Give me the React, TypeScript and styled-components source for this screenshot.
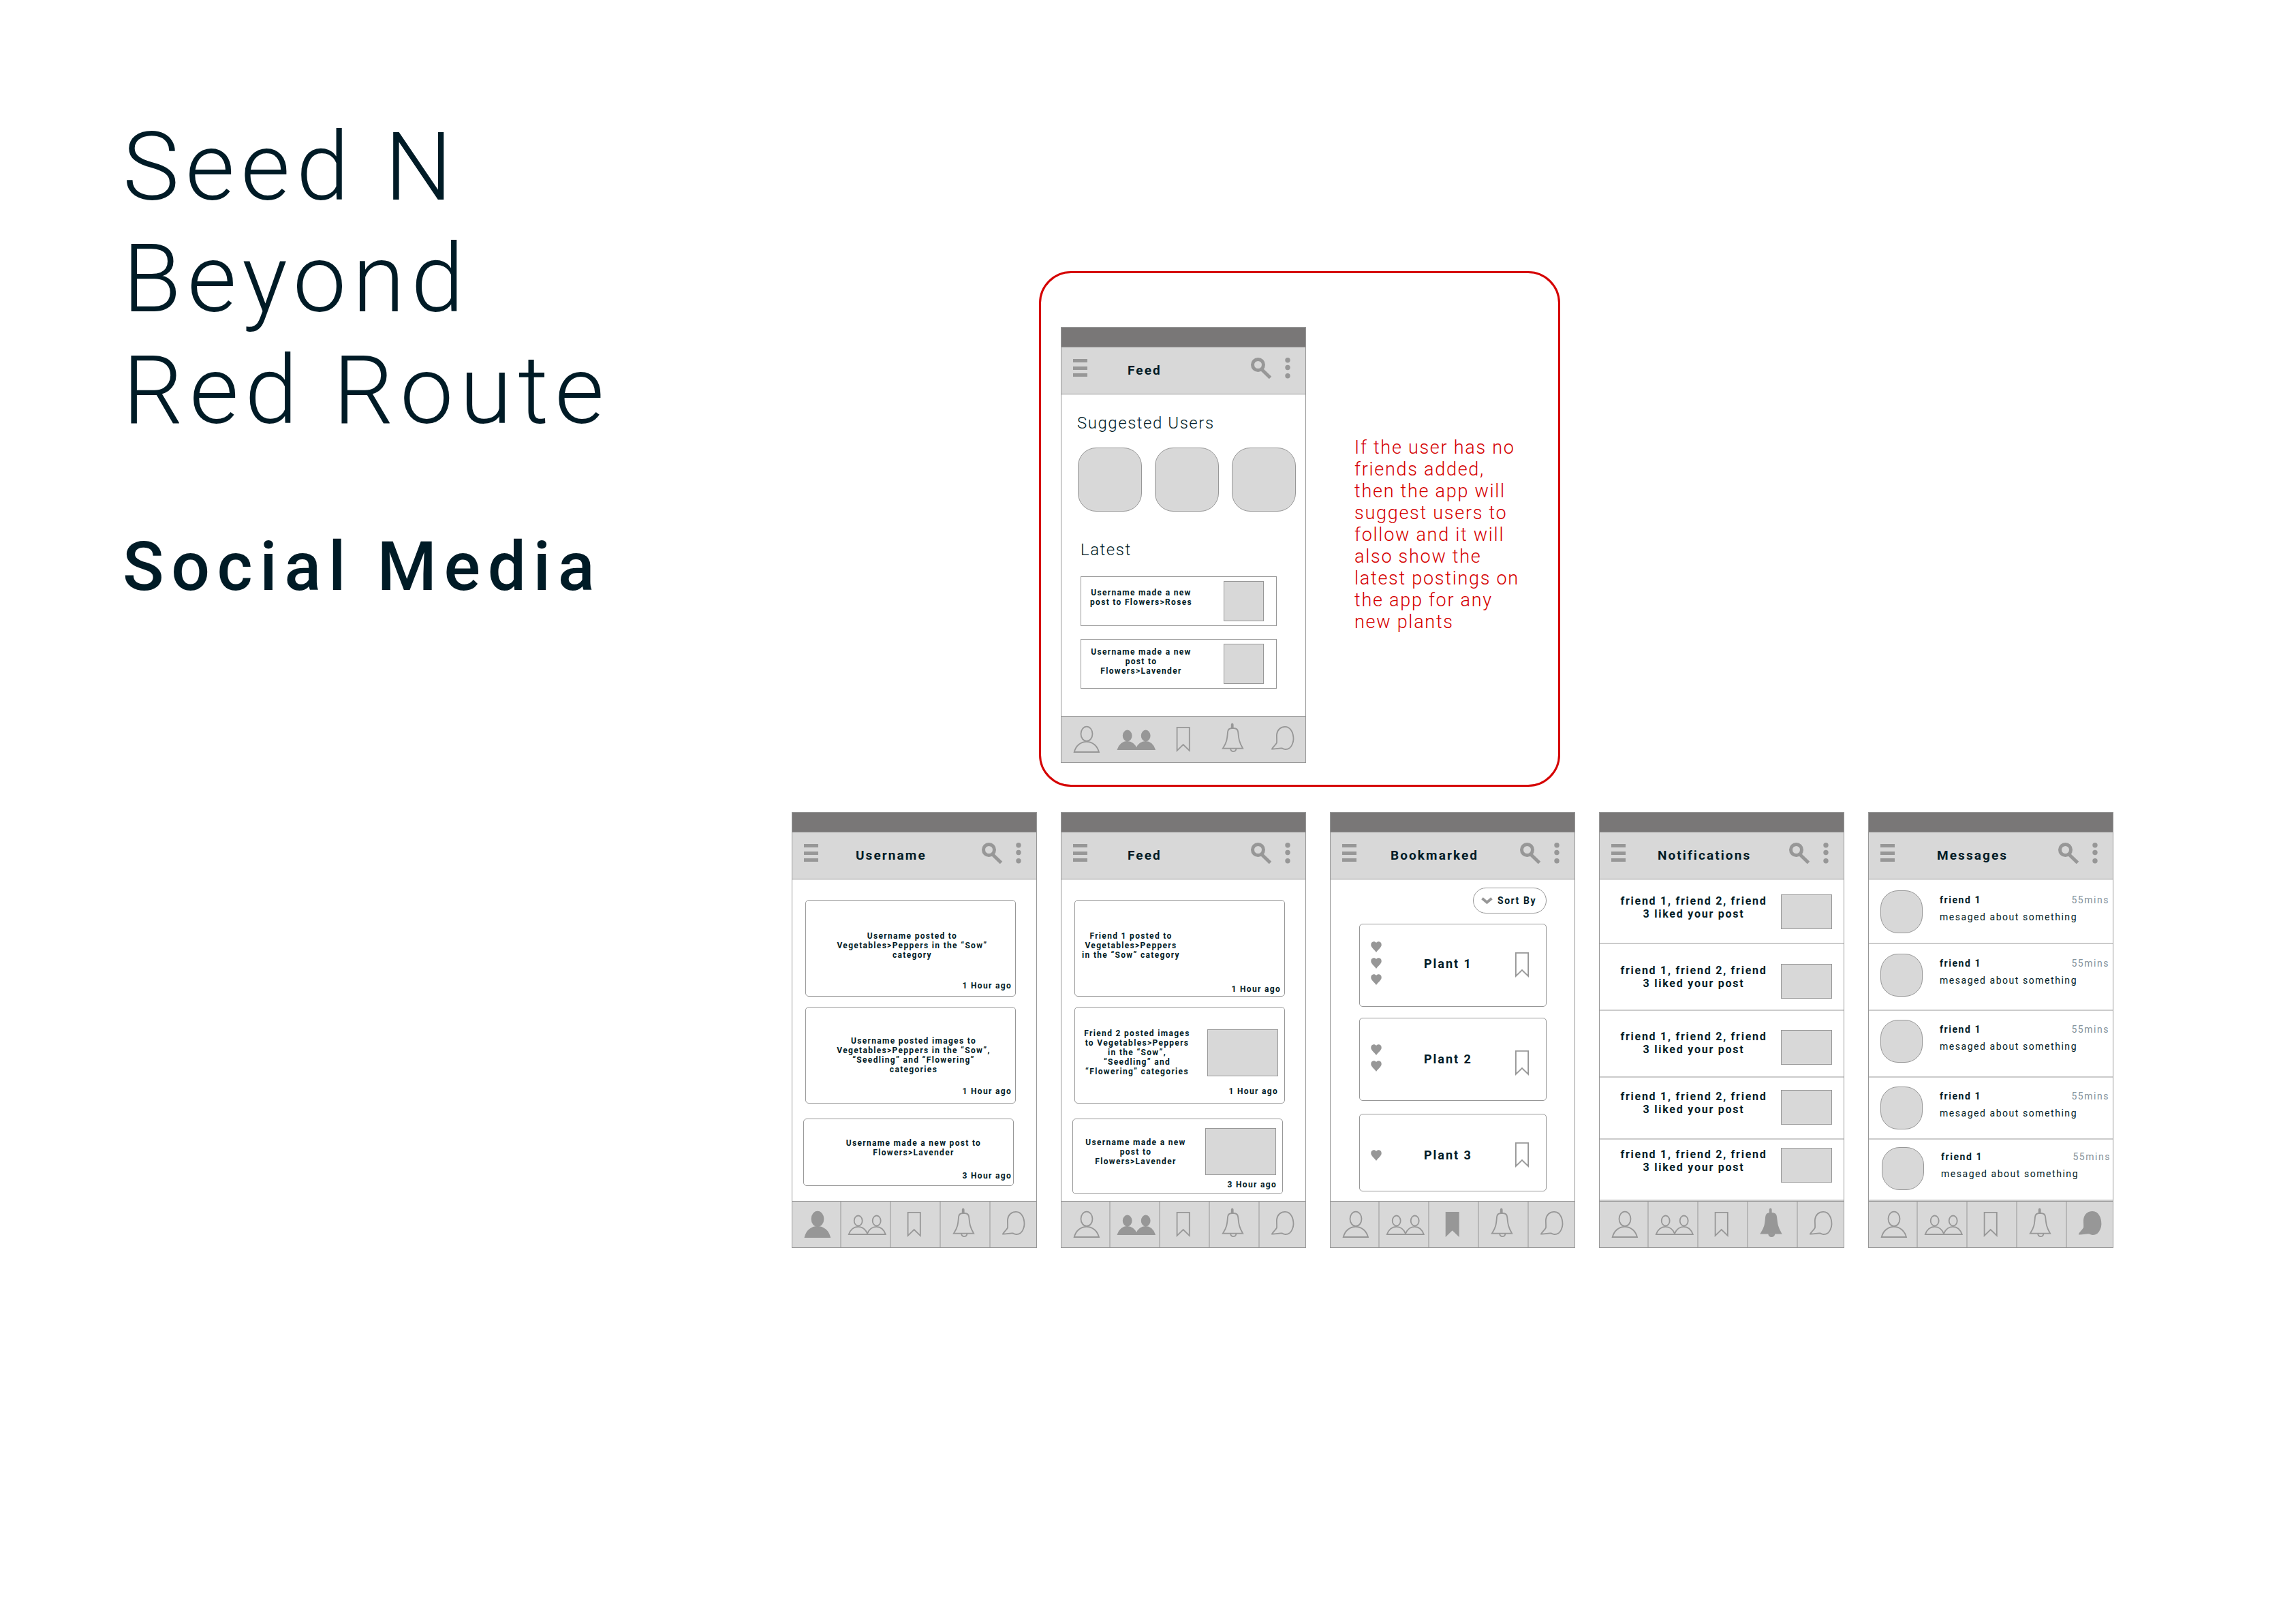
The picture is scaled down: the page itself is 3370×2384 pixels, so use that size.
import React from "react";
import styled, { createGlobalStyle } from "styled-components";

const ink = "#001b26";
const line = "#979797";
const fill = "#d8d8d8";
const red = "#d50000";

const GlobalStyle = createGlobalStyle`
  * { box-sizing: border-box; }
  body {
    margin: 0;
    background: #fff;
    color: ${ink};
    font-family: Roboto, "Liberation Sans", sans-serif;
  }
  h1, h2, h3, p, ul { margin: 0; padding: 0; font-weight: inherit; }
  ul { list-style: none; }
  button { padding: 0; border: 0; background: none; color: inherit; font: inherit; cursor: pointer; }
  svg { display: block; }
`;

/* ---------- page ---------- */

const Page = styled.main`
  display: flex;
  justify-content: space-between;
  align-items: flex-start;
  min-height: 100vh;
  padding: 163px 268px 160px 180px;
`;

const Intro = styled.header`
  display: flex;
  flex-direction: column;
  gap: 118px;
`;

const Title = styled.h1`
  font-size: 140px;
  line-height: 164px;
  font-weight: 300;
  letter-spacing: 0.064em;
  span { display: block; }
`;

const Subtitle = styled.h2`
  font-size: 100px;
  line-height: 117px;
  font-weight: 500;
  letter-spacing: 0.106em;
`;

const Board = styled.div`
  display: flex;
  flex-direction: column;
  gap: 37px;
  margin-top: 235px;
`;

const Callout = styled.section`
  display: flex;
  align-items: flex-start;
  gap: 71px;
  align-self: flex-start;
  margin-left: 363px;
  padding: 79px 51px 32px 29px;
  border: 3px solid ${red};
  border-radius: 47px;
`;

const Note = styled.p`
  width: 248px;
  margin-top: 161px;
  color: ${red};
  font-size: 27px;
  line-height: 32px;
  font-weight: 300;
  letter-spacing: 0.064em;
`;

const Flow = styled.section`
  display: flex;
  gap: 35px;
`;

/* ---------- phone ---------- */

const Frame = styled.article`
  display: flex;
  flex-direction: column;
  flex: none;
  width: 360px;
  height: 640px;
  border: 1px solid ${line};
  background: #fff;
`;

const StatusBar = styled.div`
  flex: none;
  height: 29px;
  border-bottom: 1px solid ${line};
  background: #797777;
`;

const AppBar = styled.header`
  display: flex;
  align-items: flex-start;
  flex: none;
  height: 69px;
  padding: 15px 22px 0 17px;
  border-bottom: 1px solid ${line};
  background: ${fill};
`;

const ScreenTitle = styled.h3<{ $inset: number }>`
  flex: 1;
  margin-top: 7px;
  padding-left: ${(p) => p.$inset}px;
  font-size: 19px;
  line-height: 24px;
  font-weight: 700;
  letter-spacing: 0.11em;
  text-align: left;
`;

const Actions = styled.div`
  display: flex;
  gap: 19px;
`;

const Content = styled.div`
  display: flex;
  flex-direction: column;
  flex: 1;
  min-height: 0;
`;

const TabBar = styled.nav<{ $divided: boolean }>`
  display: grid;
  grid-template-columns: 72px 73px 73px 73px 1fr;
  flex: none;
  height: 68px;
  border-top: 1px solid ${line};
  background: ${fill};
  button { overflow: hidden; border-right: 2px solid ${(p) => (p.$divided ? "#b7b7b7" : "transparent")}; }
  button:last-child { border-right: 0; }
`;

const Drawing = ({ w, h, children }: { w: number; h: number; children: React.ReactNode }) => (
  <svg width={w} height={h} viewBox={`0 0 ${w} ${h}`} fill="none" stroke={line} aria-hidden="true">
    {children}
  </svg>
);

const MenuIcon = () => (
  <Drawing w={21} h={31}>
    <path d="M0 4.5H21M0 15.5H21M0 25.5H21" strokeWidth="5" />
  </Drawing>
);

const SearchIcon = () => (
  <Drawing w={31} h={31}>
    <circle cx="10.5" cy="10.5" r="8" strokeWidth="5" />
    <path d="M16 17.5L28.5 29.5" strokeWidth="5" />
  </Drawing>
);

const MoreIcon = () => (
  <Drawing w={8} h={31}>
    <g fill={line} stroke="none">
      <circle cx="4" cy="3.7" r="3.7" />
      <circle cx="4" cy="14.5" r="3.7" />
      <circle cx="4" cy="26.7" r="3.7" />
    </g>
  </Drawing>
);

const ribbon = "M.9.9H19.1V34.8L10 26L.9 34.8Z";

const BookmarkIcon = () => (
  <Drawing w={20} h={37}>
    <path d={ribbon} strokeWidth="1.8" />
  </Drawing>
);

const HeartIcon = () => (
  <Drawing w={16} h={16}>
    <path
      stroke="none"
      fill={line}
      d="M8 2C9 .2 10.8 0 12.2.2C14.8.6 16 3 15.7 5.6C15.4 8.6 11.5 11.6 8 16C4.5 11.6.6 8.6.3 5.6C0 3 1.2.6 3.8.2C5.2 0 7 .2 8 2Z"
    />
  </Drawing>
);

const ChevronIcon = () => (
  <Drawing w={17} h={11}>
    <path d="M1.5 1.8L8.5 7.7L15.5 1.8" strokeWidth="4" />
  </Drawing>
);

type Tab = "profile" | "feed" | "bookmarks" | "alerts" | "messages";

const tabs: { id: Tab; label: string; art: React.ReactNode }[] = [
  {
    id: "profile",
    label: "Profile",
    art: (
      <>
        <ellipse cx="37" cy="25.3" rx="8.5" ry="10.7" />
        <path d="M18.7 52C21 43 28 36.8 36.8 36.8S52.7 43 55 52Z" />
      </>
    ),
  },
  {
    id: "feed",
    label: "Friends",
    art: (
      <>
        <ellipse cx="24.7" cy="28" rx="6" ry="7.5" />
        <ellipse cx="51.7" cy="28" rx="6" ry="7.5" />
        <path d="M10.8 48C13 41.5 18 36.8 24.5 36.8S35.5 41 38 46.8C40.5 41 45 36.8 51.5 36.8S62.5 41.5 64.8 48Z" />
      </>
    ),
  },
  {
    id: "bookmarks",
    label: "Bookmarks",
    art: <path transform="translate(23.7 15)" d={ribbon} />,
  },
  {
    id: "alerts",
    label: "Notifications",
    art: (
      <>
        <path fill={line} stroke="none" d="M30.8 17V12C30.8 8.5 34.6 8.5 34.6 12V17Z" />
        <path d="M32.5 17C28.5 17 26.4 18.5 26 22.5C25.2 32 25 37.5 18.8 46.7H48.2C42.5 37.5 42.2 32 41.2 22.5C40.8 18.5 38.5 17 34.5 17Z" />
        <path d="M30 47.2C31.5 52.5 37 52.5 38.6 47.2" />
      </>
    ),
  },
  {
    id: "messages",
    label: "Messages",
    art: (
      <path d="M25 26C26 19 31 14.8 37 14.8C45 14.8 49.5 23 49.5 33C49.5 37 47 44 44 46C40 48.5 36 48.5 33 46.5C29 45.7 25 47.5 18 47.5C17.8 46 24.5 40.5 25 38C25.3 34 24.6 29 25 26Z" />
    ),
  },
];

type PhoneProps = {
  title: string;
  inset: number;
  active: Tab;
  divided?: boolean;
  children: React.ReactNode;
};

const Phone = ({ title, inset, active, divided = true, children }: PhoneProps) => (
  <Frame>
    <StatusBar />
    <AppBar>
      <button aria-label="Menu"><MenuIcon /></button>
      <ScreenTitle $inset={inset}>{title}</ScreenTitle>
      <Actions>
        <button aria-label="Search"><SearchIcon /></button>
        <button aria-label="More"><MoreIcon /></button>
      </Actions>
    </AppBar>
    <Content>{children}</Content>
    <TabBar $divided={divided}>
      {tabs.map((tab) => (
        <button key={tab.id} aria-label={tab.label} aria-current={tab.id === active ? "page" : undefined}>
          <Drawing w={71} h={67}>
            <g strokeWidth="1.8" fill={tab.id === active ? line : "none"}>{tab.art}</g>
          </Drawing>
        </button>
      ))}
    </TabBar>
  </Frame>
);

/* ---------- suggested users ---------- */

const SectionTitle = styled.h3<{ $indent: number }>`
  margin-left: ${(p) => p.$indent}px;
  font-size: 24px;
  line-height: 28px;
  font-weight: 300;
  letter-spacing: 0.064em;
`;

const Suggested = styled.section`
  display: flex;
  flex-direction: column;
  gap: 22px;
  padding-top: 28px;
`;

const Avatars = styled.ul`
  display: flex;
  gap: 19px;
  padding-left: 24px;
`;

const Avatar = styled.li`
  width: 94px;
  height: 94px;
  border: 1px solid ${line};
  border-radius: 27px;
  background: ${fill};
`;

const Latest = styled.section`
  display: flex;
  flex-direction: column;
  padding-top: 42px;
`;

const LatestList = styled.ul`
  display: flex;
  flex-direction: column;
  gap: 19px;
  padding: 25px 42px 0 28px;
`;

const LatestItem = styled.li<{ $lead: number }>`
  display: flex;
  justify-content: space-between;
  height: 73px;
  padding: 6px 18px 0 11px;
  border: 1px solid ${line};
  p { margin-top: ${(p) => p.$lead}px; }
`;

const Thumb = styled.div<{ $w: number; $h: number }>`
  flex: none;
  width: ${(p) => p.$w}px;
  height: ${(p) => p.$h}px;
  border: 1px solid ${line};
  background: ${fill};
`;

const Caption = styled.p<{ $w: number }>`
  width: ${(p) => p.$w}px;
  font-size: 12px;
  line-height: 14px;
  font-weight: 700;
  letter-spacing: 0.11em;
  text-align: center;
`;

/* ---------- post cards ---------- */

const Posts = styled.ul`
  padding-top: 30px;
`;

const PostCard = styled.li<{ $h: number; $gap: number; $left: number }>`
  display: flex;
  flex-direction: column;
  justify-content: space-between;
  width: 309px;
  height: ${(p) => p.$h}px;
  margin: ${(p) => p.$gap}px 0 0 ${(p) => p.$left}px;
  border: 1px solid ${line};
  border-radius: 5px;
`;

const PostBody = styled.div<{ $top: number; $left: number }>`
  display: flex;
  justify-content: space-between;
  align-items: center;
  padding: ${(p) => p.$top}px 9px 0 ${(p) => p.$left}px;
`;

const Time = styled.time<{ $right: number; $bottom: number }>`
  padding: 0 ${(p) => p.$right}px ${(p) => p.$bottom}px 0;
  font-size: 12px;
  line-height: 14px;
  font-weight: 700;
  letter-spacing: 0.11em;
  text-align: right;
`;

type Post = {
  text: string;
  time: string;
  height: number;
  gap: number;
  left: number;
  body: { top: number; left: number; width: number };
  stamp: { right: number; bottom: number };
  image?: boolean;
};

const PostList = ({ posts }: { posts: Post[] }) => (
  <Posts>
    {posts.map((p) => (
      <PostCard key={p.text} $h={p.height} $gap={p.gap} $left={p.left}>
        <PostBody $top={p.body.top} $left={p.body.left}>
          <Caption $w={p.body.width}>{p.text}</Caption>
          {p.image && <Thumb $w={104} $h={69} />}
        </PostBody>
        <Time $right={p.stamp.right} $bottom={p.stamp.bottom}>{p.time}</Time>
      </PostCard>
    ))}
  </Posts>
);

const userPosts: Post[] = [
  { text: "Username posted to Vegetables>Peppers in the “Sow” category", time: "1 Hour ago", height: 142, gap: 0, left: 19, body: { top: 45, left: 38, width: 236 }, stamp: { right: 5, bottom: 8 } },
  { text: "Username posted images to Vegetables>Peppers in the “Sow”, “Seedling” and “Flowering” categories", time: "1 Hour ago", height: 142, gap: 15, left: 19, body: { top: 42, left: 40, width: 236 }, stamp: { right: 5, bottom: 10 } },
  { text: "Username made a new post to Flowers>Lavender", time: "3 Hour ago", height: 99, gap: 22, left: 16, body: { top: 28, left: 43, width: 236 }, stamp: { right: 2, bottom: 7 } },
];

const feedPosts: Post[] = [
  { text: "Friend 1 posted to Vegetables>Peppers in the “Sow” category", time: "1 Hour ago", height: 142, gap: 0, left: 19, body: { top: 45, left: 8, width: 148 }, stamp: { right: 5, bottom: 3 } },
  { text: "Friend 2 posted images to Vegetables>Peppers in the “Sow”, “Seedling” and “Flowering” categories", time: "1 Hour ago", height: 142, gap: 15, left: 19, body: { top: 31, left: 13, width: 156 }, stamp: { right: 9, bottom: 10 }, image: true },
  { text: "Username made a new post to Flowers>Lavender", time: "3 Hour ago", height: 111, gap: 22, left: 16, body: { top: 13, left: 15, width: 154 }, stamp: { right: 8, bottom: 6 }, image: true },
];

/* ---------- bookmarks ---------- */

const Bookmarks = styled.div`
  display: flex;
  flex-direction: column;
  padding: 12px 41px 0 42px;
`;

const SortButton = styled.button`
  && {
    display: flex;
    align-items: center;
    align-self: flex-end;
    gap: 7px;
    width: 108px;
    height: 38px;
    padding-left: 11px;
    border: 1px solid ${line};
    border-radius: 19px;
    font-size: 14px;
    line-height: 16px;
    font-weight: 700;
    letter-spacing: 0.11em;
  }
`;

const PlantCard = styled.li<{ $h: number; $gap: number }>`
  display: flex;
  align-items: flex-start;
  height: ${(p) => p.$h}px;
  margin-top: ${(p) => p.$gap}px;
  padding: 0 25px 0 16px;
  border: 1px solid ${line};
  border-radius: 5px;
`;

const Hearts = styled.div<{ $top: number }>`
  display: flex;
  flex-direction: column;
  gap: 8px;
  margin-top: ${(p) => p.$top}px;
`;

const PlantName = styled.h3<{ $top: number }>`
  flex: 1;
  margin-top: ${(p) => p.$top}px;
  padding-left: 62px;
  font-size: 18px;
  line-height: 24px;
  font-weight: 700;
  letter-spacing: 0.11em;
`;

const Toggle = styled.button<{ $top: number }>`
  && { margin-top: ${(p) => p.$top}px; }
`;

const plants = [
  { name: "Plant 1", hearts: 3, height: 122, gap: 15, tops: [25, 46, 41] },
  { name: "Plant 2", hearts: 2, height: 122, gap: 16, tops: [38, 48, 47] },
  { name: "Plant 3", hearts: 1, height: 114, gap: 19, tops: [52, 48, 41] },
];

/* ---------- rows ---------- */

const Row = styled.li<{ $h: number; $top: number }>`
  display: flex;
  align-items: flex-start;
  height: ${(p) => p.$h}px;
  padding-top: ${(p) => p.$top}px;
  border-bottom: 2px solid #cbcbcb;
`;

const NoticeRow = styled(Row)`
  justify-content: space-between;
  padding-left: 26px;
  padding-right: 17px;
`;

const NoticeText = styled.p`
  width: 224px;
  font-size: 16px;
  line-height: 19px;
  font-weight: 700;
  letter-spacing: 0.11em;
  text-align: center;
`;

const MessageRow = styled(Row)<{ $left: number }>`
  gap: 25px;
  padding-left: ${(p) => p.$left}px;
  padding-right: ${(p) => 22 - p.$left}px;
`;

const Face = styled.div`
  flex: none;
  width: 62px;
  height: 63px;
  border: 1px solid ${line};
  border-radius: 26px;
  background: ${fill};
`;

const MessageText = styled.div`
  display: grid;
  grid-template-columns: 1fr auto;
  row-gap: 9px;
  flex: 1;
  margin-top: 6px;
  font-size: 14px;
  line-height: 16px;
  letter-spacing: 0.11em;
  strong { font-weight: 700; }
  time { color: #84929a; }
  p { grid-column: 1 / -1; }
`;

const noticeRows = [[95, 22], [98, 29], [98, 28], [91, 18], [90, 12]];
const messageRows = [[95, 16, 17], [98, 14, 17], [98, 13, 17], [91, 13, 17], [90, 11, 19]];

export default function App() {
  return (
    <>
      <GlobalStyle />
      <Page>
        <Intro>
          <Title>
            <span>Seed N</span>
            <span>Beyond</span>
            <span>Red Route</span>
          </Title>
          <Subtitle>Social Media</Subtitle>
        </Intro>

        <Board>
          <Callout>
            <Phone title="Feed" inset={59} active="feed" divided={false}>
              <Suggested>
                <SectionTitle $indent={23}>Suggested Users</SectionTitle>
                <Avatars>
                  <Avatar />
                  <Avatar />
                  <Avatar />
                </Avatars>
              </Suggested>
              <Latest>
                <SectionTitle $indent={28}>Latest</SectionTitle>
                <LatestList>
                  <LatestItem $lead={10}>
                    <Caption $w={154}>Username made a new post to Flowers&gt;Roses</Caption>
                    <Thumb $w={59} $h={59} />
                  </LatestItem>
                  <LatestItem $lead={5}>
                    <Caption $w={154}>Username made a new post to Flowers&gt;Lavender</Caption>
                    <Thumb $w={59} $h={59} />
                  </LatestItem>
                </LatestList>
              </Latest>
            </Phone>
            <Note>
              If the user has no friends added, then the app will suggest users to follow and it will also show the
              latest postings on the app for any new plants
            </Note>
          </Callout>

          <Flow>
            <Phone title="Username" inset={55} active="profile">
              <PostList posts={userPosts} />
            </Phone>

            <Phone title="Feed" inset={59} active="feed">
              <PostList posts={feedPosts} />
            </Phone>

            <Phone title="Bookmarked" inset={50} active="bookmarks">
              <Bookmarks>
                <SortButton>
                  <ChevronIcon />
                  Sort By
                </SortButton>
                <ul>
                  {plants.map((plant) => (
                    <PlantCard key={plant.name} $h={plant.height} $gap={plant.gap}>
                      <Hearts $top={plant.tops[0]}>
                        {Array.from({ length: plant.hearts }, (_, i) => (
                          <HeartIcon key={i} />
                        ))}
                      </Hearts>
                      <PlantName $top={plant.tops[1]}>{plant.name}</PlantName>
                      <Toggle $top={plant.tops[2]} aria-label={`Remove ${plant.name}`}>
                        <BookmarkIcon />
                      </Toggle>
                    </PlantCard>
                  ))}
                </ul>
              </Bookmarks>
            </Phone>

            <Phone title="Notifications" inset={47} active="alerts">
              <ul>
                {noticeRows.map(([height, top], i) => (
                  <NoticeRow key={i} $h={height} $top={top}>
                    <NoticeText>friend 1, friend 2, friend 3 liked your post</NoticeText>
                    <Thumb $w={75} $h={51} />
                  </NoticeRow>
                ))}
              </ul>
            </Phone>

            <Phone title="Messages" inset={62} active="messages">
              <ul>
                {messageRows.map(([height, top, left], i) => (
                  <MessageRow key={i} $h={height} $top={top} $left={left}>
                    <Face />
                    <MessageText>
                      <strong>friend 1</strong>
                      <time>55mins</time>
                      <p>mesaged about something</p>
                    </MessageText>
                  </MessageRow>
                ))}
              </ul>
            </Phone>
          </Flow>
        </Board>
      </Page>
    </>
  );
}
